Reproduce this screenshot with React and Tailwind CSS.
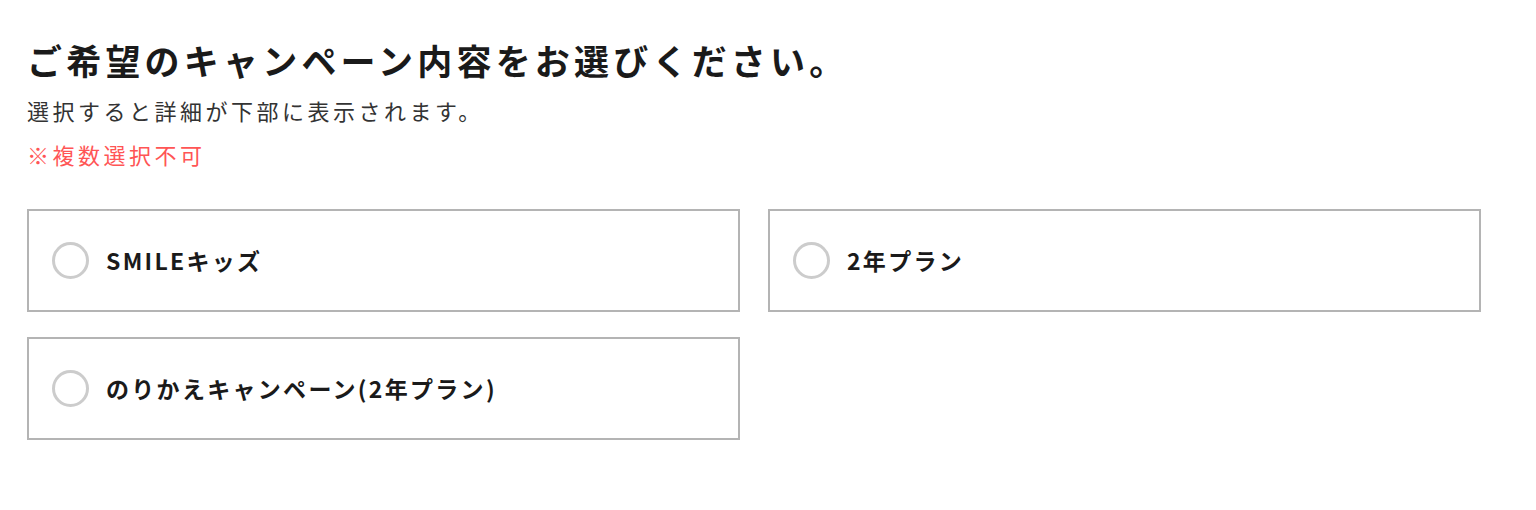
export default function App() {
  const options = ["SMILEキッズ", "2年プラン", "のりかえキャンペーン(2年プラン)"];
  return (
    <div
      className="min-h-[510px] bg-white pl-[27px] pt-[35px]"
      style={{ fontFamily: '"Noto Sans CJK JP", "Noto Sans", sans-serif' }}
    >
      <h1 className="text-[35px] leading-[50px] font-bold text-[#1a1a1a] tracking-[0.12em]">
        ご希望のキャンペーン内容をお選びください。
      </h1>
      <p className="mt-[3px] text-[22px] leading-[44px] text-[#333333] tracking-[3.5px]">
        選択すると詳細が下部に表示されます。
      </p>
      <p className="text-[22px] leading-[44px] text-[#ff5555] tracking-[3.5px]">
        ※複数選択不可
      </p>
      <div className="mt-[33px] grid w-[1454px] grid-cols-2 gap-x-[28px] gap-y-[25px]">
        {options.map((o) => (
          <label
            key={o}
            className="flex h-[103px] cursor-pointer items-center gap-[17px] border-2 border-[#b4b4b4] pl-[23px]"
          >
            <span className="block h-[37px] w-[37px] rounded-full border-[3px] border-[#cccccc]" />
            <span className="text-[23px] font-bold text-[#1a1a1a] tracking-[0.1em]">{o}</span>
          </label>
        ))}
      </div>
    </div>
  );
}
